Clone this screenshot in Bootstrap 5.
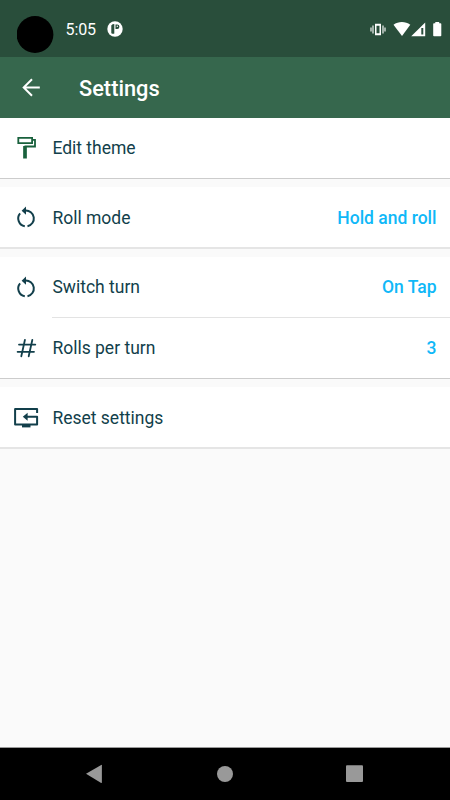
<!DOCTYPE html>
<html lang="en">
<head>
<meta charset="utf-8">
<meta name="viewport" content="width=device-width, initial-scale=1">
<title>Settings</title>
<link rel="stylesheet" href="https://cdn.jsdelivr.net/npm/bootstrap@5.3.0/dist/css/bootstrap.min.css">
<style>
body{font-family:Roboto,"Noto Sans",sans-serif;background:#fafafa;color:#123f4b;height:800px}
svg{display:block;flex:none}
.status-bar{height:57px;background:#294e3b;padding-left:17px;padding-right:8px}
.camera{width:37px;height:37px;margin-top:16px}
.clock{font-size:16px;line-height:20px;margin-left:11.5px;margin-top:2px;width:30px;white-space:nowrap;letter-spacing:-.1px}
.app-icon{margin-left:11.5px}
.app-bar{height:61px;background:#36674d;padding-left:19px}
.app-title{font-size:21.8px;line-height:28px;font-weight:500;margin-left:36px;margin-top:3px}
.group{border-bottom:1px solid #ccc;margin-bottom:8px}
.group.thick{border-bottom:2px solid #e5e5e5}
.setting{height:60px;padding-left:13px}
.setting-body{margin-left:13.4px;padding-right:13.5px;font-size:17.5px}
.thick .setting-body span{margin-top:1.5px}
.setting-body.divided{box-shadow:0 1px #e3e3e3}
.split{margin-bottom:1px}
.choice{color:#0fb8f8;font-weight:500}
.nav-keys{height:53px;background:#000;border-top:1px solid #999}
</style>
<script src="https://cdn.jsdelivr.net/npm/bootstrap@5.3.0/dist/js/bootstrap.bundle.min.js"></script>
</head>
<body class="d-flex flex-column overflow-hidden">
<svg class="d-none">
<symbol id="rotate" viewBox="0 0 26 26"><g fill="none" stroke="#123f4b" stroke-width="2"><path d="M12.2 6.5a8 8 0 0 1 2.3 15.8M11.8 22.3a8 8 0 0 1-4.7-13"/></g><path d="M8.6 6.8l4.4-4.2v8.2z" fill="#123f4b"/></symbol>
</svg>
<header>
<div class="status-bar d-flex align-items-center text-white">
<svg class="camera align-self-start" viewBox="0 0 37 37"><circle cx="18" cy="18.5" r="18.4"/></svg>
<span class="clock">5:05</span>
<svg class="app-icon" width="16" height="16" viewBox="0 0 16 16"><circle cx="8" cy="8" r="7.7" fill="#fff"/><path d="M4.3 4.4q1-1.4 3-1.4v9.6q-1.2.7-3-.4z" fill="#294e3b"/><path d="M8.5 3.5h1.7a2.2 2.2 0 0 1 0 4.4H8.5z" fill="#294e3b"/><circle cx="10.3" cy="5.3" r=".7" fill="#fff"/></svg>
<div class="d-flex align-items-center ms-auto">
<svg width="72" height="16" viewBox="370 20 72 16" fill="#fff"><path d="M370.3 26.5h1.4v4h-1.4zM372.3 24.5h1.4v8h-1.4zM382.3 24.5h1.4v8h-1.4zM384.3 26.5h1.4v4h-1.4z" opacity=".8"/><path fill-rule="evenodd" d="M375 22.8h6v11.4h-6zm1.5 2v7.4h3v-7.4z"/><path d="M393.5 23.7c4.8-3.7 12-3.7 16.8 0L402 35z"/><path fill-rule="evenodd" d="M425.2 21.5v13.7h-14zM421.3 27v6.5h2V27z"/><path d="M434 22.2h1.3V21h3.9v1.2h1.3q.8 0 .8.8v11.4q0 .8-.8.8H434q-.8 0-.8-.8V23q0-.8.8-.8z"/></svg>
</div>
</div>
<div class="app-bar d-flex align-items-center text-white">
<svg width="24" height="24" viewBox="0 0 24 24" fill="none" stroke="#fff" stroke-width="2"><path d="M20.8 11.5H4.5M13 3.2L4.7 11.5l8.3 8.3"/></svg>
<h1 class="app-title mb-0">Settings</h1>
</div>
</header>
<main class="flex-grow-1">
<section class="group bg-white">
<div class="setting d-flex">
<svg class="align-self-center" width="26" height="26" viewBox="13 135 26 26" fill="none" stroke="#19613d" stroke-width="1.8"><path d="M18.3 137.9h13.8v5.2H18.3zM32.1 139.9H35v6.6H24.5"/><path d="M25 146v12.5" stroke-width="3.7"/></svg>
<div class="setting-body d-flex flex-grow-1 align-items-center justify-content-between"><span>Edit theme</span></div>
</div>
</section>
<section class="group thick bg-white">
<div class="setting d-flex">
<svg class="align-self-center" width="26" height="26"><use href="#rotate"/></svg>
<div class="setting-body d-flex flex-grow-1 align-items-center justify-content-between"><span>Roll mode</span><span class="choice">Hold and roll</span></div>
</div>
</section>
<section class="group bg-white">
<div class="setting split d-flex">
<svg class="align-self-center" width="26" height="26"><use href="#rotate"/></svg>
<div class="setting-body divided d-flex flex-grow-1 align-items-center justify-content-between"><span>Switch turn</span><span class="choice">On Tap</span></div>
</div>
<div class="setting d-flex">
<svg class="align-self-center" width="26" height="26" viewBox="13 335 26 26" fill="none" stroke="#123f4b" stroke-width="1.8" stroke-linecap="round"><path d="M24.9 340l-3.6 16.3M32.3 340l-3.6 16.3M19 344.6h16.3M17.6 351.8H34"/></svg>
<div class="setting-body d-flex flex-grow-1 align-items-center justify-content-between"><span>Rolls per turn</span><span class="choice">3</span></div>
</div>
</section>
<section class="group thick bg-white">
<div class="setting d-flex">
<svg class="align-self-center" width="26" height="26" viewBox="13 404 26 26" fill="none" stroke="#123f4b" stroke-width="2" stroke-linejoin="round"><path d="M37.1 413v-4H15.1v15.5h22v-7.7H26"/><path d="M22.8 416.8l4.8-4v8z" fill="#123f4b" stroke="none"/><path d="M22 426.2h8.5" stroke-width="2.4"/></svg>
<div class="setting-body d-flex flex-grow-1 align-items-center justify-content-between"><span>Reset settings</span></div>
</div>
</section>
</main>
<footer class="nav-keys">
<svg width="450" height="52" viewBox="0 748 450 52" fill="#999"><path d="M86 773.7l15.2-8.8q.7-.2.7.6v16.8q0 .8-.7.6z"/><circle cx="225" cy="774" r="8"/><rect x="346" y="765.3" width="17" height="16.7" rx="1"/></svg>
</footer>
</body>
</html>
